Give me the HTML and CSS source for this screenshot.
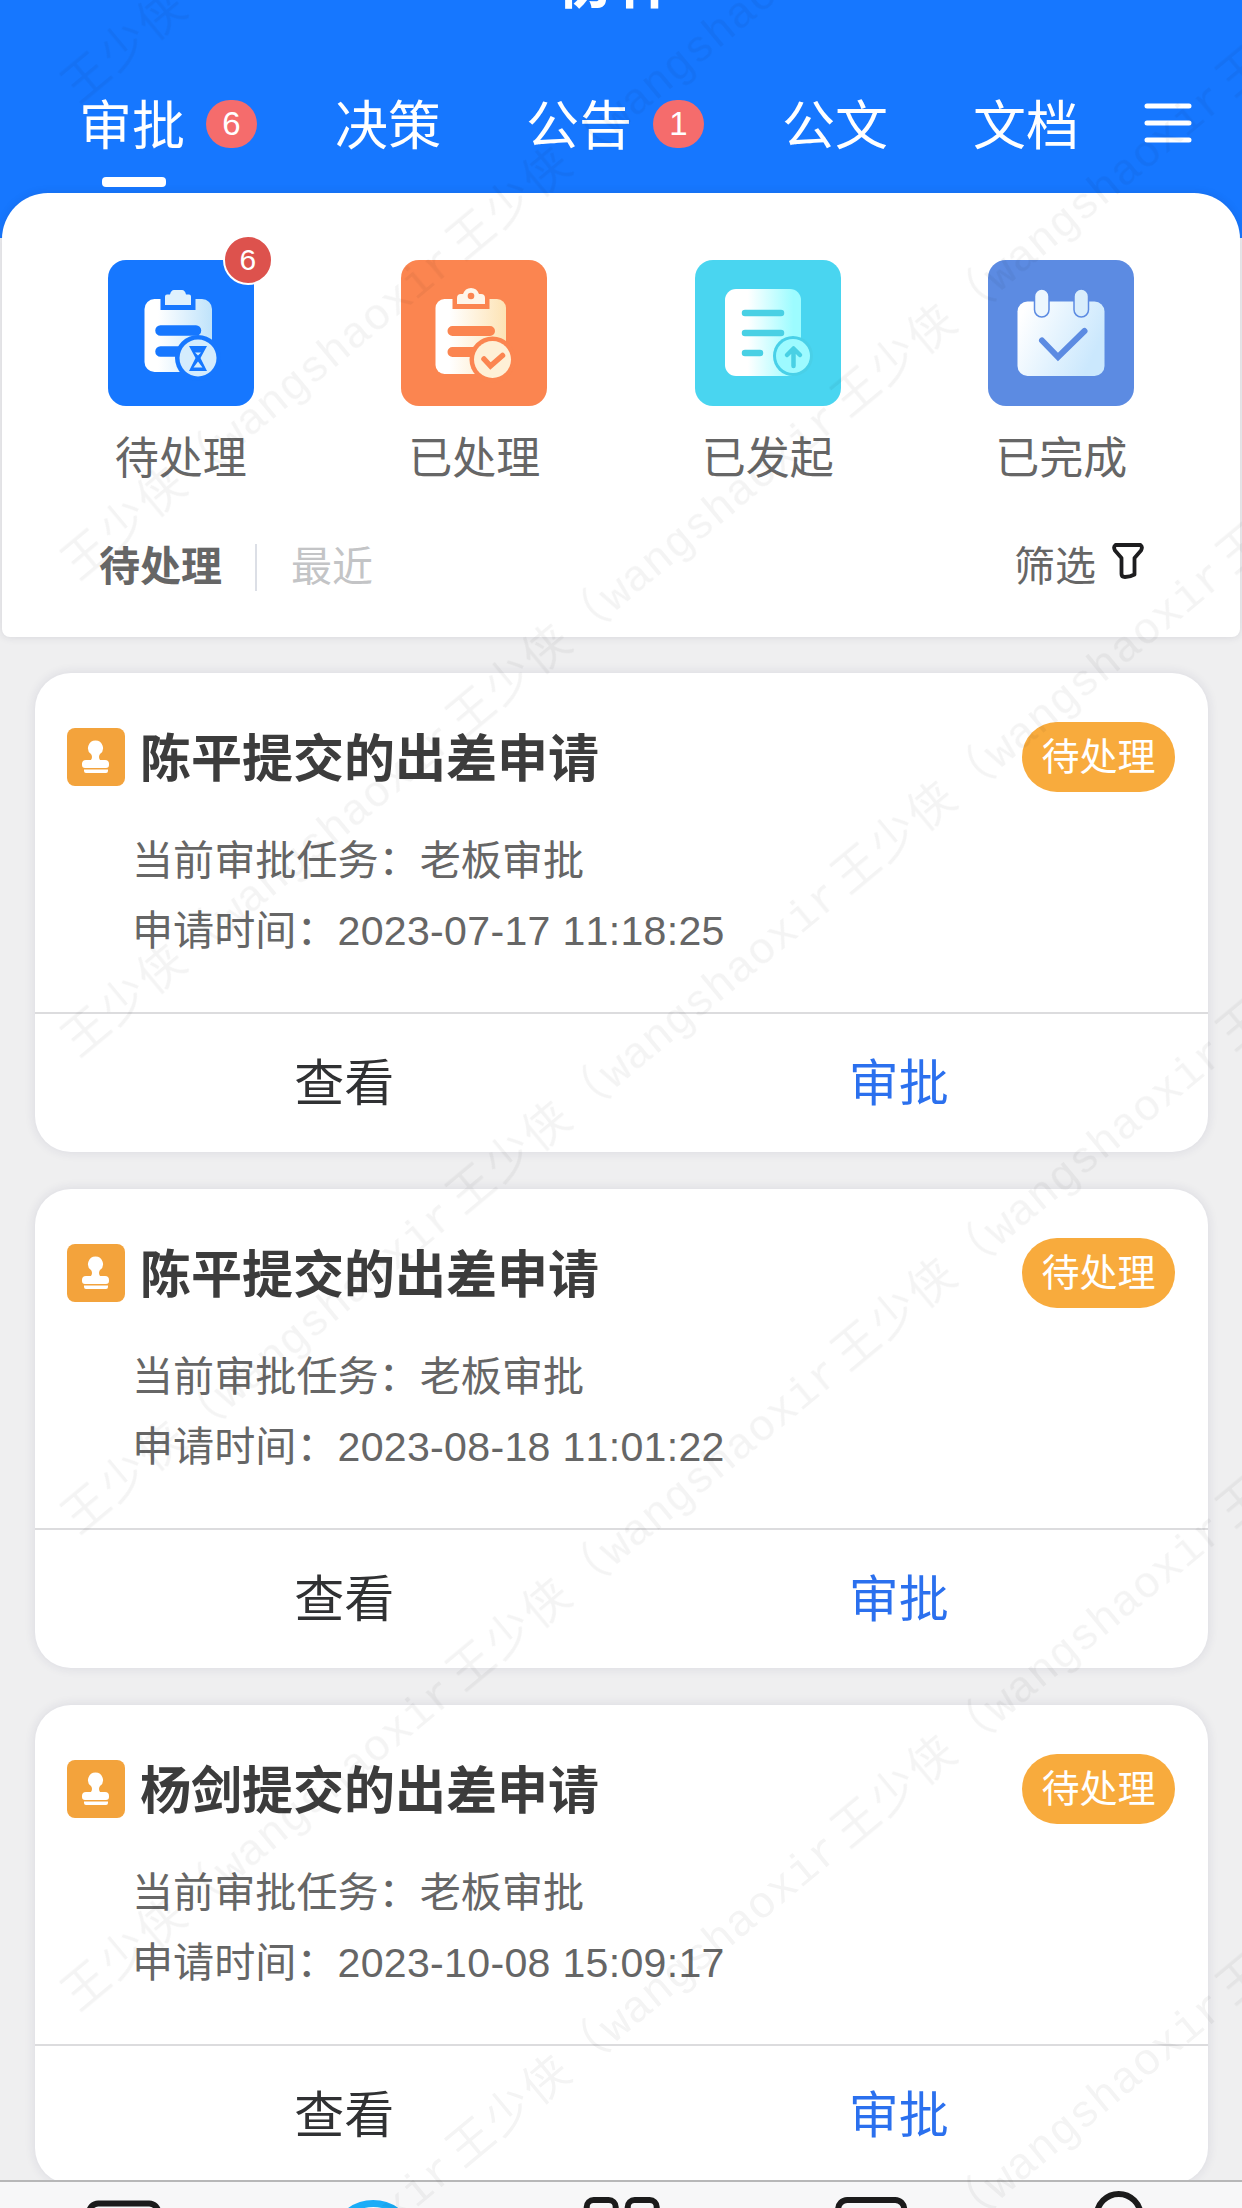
FILE: index.html
```html
<!DOCTYPE html>
<html lang="zh-CN">
<head>
    <meta charset="UTF-8">
    <meta name="viewport" content="width=device-width, initial-scale=1.0">
    <title>协作</title>
    <link rel="stylesheet" href="styles.css">
</head>
<body>
    <div class="app">
        <header class="header">
            <h1 class="page-title">协作</h1>
            <nav class="tabs">
                <a class="tab active">审批<span class="tab-badge">6</span></a>
                <a class="tab">决策</a>
                <a class="tab">公告<span class="tab-badge">1</span></a>
                <a class="tab">公文</a>
                <a class="tab">文档</a>
                <svg class="menu-icon" width="48" height="48" viewBox="0 0 48 48">
                    <path d="M3 5H45M3 22H45M3 39H45" stroke="#fff" stroke-width="5" stroke-linecap="round"/>
                </svg>
            </nav>
        </header>

        <section class="panel">
            <div class="shortcuts">
                <div class="shortcut">
                    <div class="tile tile-blue">
                        <svg viewBox="0 0 146 146">
                            <defs>
                                <linearGradient id="g1"><stop offset=".2" stop-color="#fff"/><stop offset="1" stop-color="#bfe3fb"/></linearGradient>
                            </defs>
                            <rect x="36.5" y="39" width="67.5" height="73" rx="10" fill="url(#g1)"/>
                            <path d="M52.5 37H87.5V50H52.5Z" fill="#1677ff"/>
                            <path d="M57 45V36.5Q57 34.5 59 34.5H62Q63 30 66 30H74Q77 30 78 34.5H81Q83 34.5 83 36.5V45Z" fill="#dff1fd"/>
                            <path d="M52.5 70.5H88M52.5 91.5H80" stroke="#1677ff" stroke-width="10.5" stroke-linecap="round"/>
                            <circle cx="90" cy="98" r="23" fill="#1677ff"/>
                            <circle cx="90" cy="98" r="18.5" fill="#d4ecfd"/>
                            <path d="M81 86H99L92.5 98L99 111H81L87.5 98Z" fill="#1677ff"/>
                            <path d="M87 92.5H93L90 95.5ZM90 101.5L94.5 107.5H85.5Z" fill="#d4ecfd"/>
                        </svg>
                        <span class="tile-badge">6</span>
                    </div>
                    <span class="shortcut-name">待处理</span>
                </div>
                <div class="shortcut">
                    <div class="tile tile-orange">
                        <svg viewBox="0 0 146 146">
                            <defs>
                                <linearGradient id="g2"><stop offset=".2" stop-color="#fff"/><stop offset="1" stop-color="#fde3b4"/></linearGradient>
                            </defs>
                            <rect x="34.5" y="39" width="70.5" height="75" rx="9" fill="url(#g2)"/>
                            <path d="M51.5 37H88.5V49H51.5Z" fill="#fb8550"/>
                            <path d="M56 44V38Q56 34 60 34H62Q64 28 70 28T78 34H80Q84 34 84 38V44Z" fill="#fef6ea"/>
                            <circle cx="70" cy="36" r="3.3" fill="#fb8550"/>
                            <path d="M51.5 71H89M51.5 92H80" stroke="#fb8550" stroke-width="10" stroke-linecap="round"/>
                            <circle cx="91.5" cy="99.5" r="23" fill="#fb8550"/>
                            <circle cx="91.5" cy="99.5" r="18.5" fill="#fef0d6"/>
                            <path d="M83 99L89.5 106L101.5 95.5" fill="none" stroke="#fb8550" stroke-width="5.5" stroke-linecap="round"/>
                        </svg>
                    </div>
                    <span class="shortcut-name">已处理</span>
                </div>
                <div class="shortcut">
                    <div class="tile tile-cyan">
                        <svg viewBox="0 0 146 146">
                            <defs>
                                <linearGradient id="g3"><stop offset=".3" stop-color="#fff"/><stop offset=".9" stop-color="#9dfcff"/></linearGradient>
                            </defs>
                            <rect x="30" y="29" width="76" height="87" rx="11" fill="url(#g3)"/>
                            <path d="M50 53H86M50 73H86M50 93H65" stroke="#49d0e4" stroke-width="6.5" stroke-linecap="round"/>
                            <circle cx="98" cy="96" r="20" fill="#49d0e8"/>
                            <circle cx="98" cy="96" r="17" fill="#9dfaff"/>
                            <path d="M98.5 106V90M92 95L98.5 88.5L105 95" fill="none" stroke="#49d0e4" stroke-width="4.5" stroke-linecap="round" stroke-linejoin="round"/>
                        </svg>
                    </div>
                    <span class="shortcut-name">已发起</span>
                </div>
                <div class="shortcut">
                    <div class="tile tile-indigo">
                        <svg viewBox="0 0 146 146">
                            <defs>
                                <linearGradient id="g4" y2=".4"><stop offset=".1" stop-color="#fff"/><stop offset="1" stop-color="#cbe8fd"/></linearGradient>
                            </defs>
                            <rect x="29.5" y="41.5" width="87" height="74.5" rx="10" fill="url(#g4)"/>
                            <g stroke="#5c8be2" stroke-width="1.5">
                                <rect x="46.5" y="29" width="14.5" height="28" rx="7.25" fill="#edf7fe"/>
                                <rect x="86" y="29" width="14.5" height="28" rx="7.25" fill="#d8edfc"/>
                            </g>
                            <path d="M54 80.5L70 97L96.5 71" fill="none" stroke="#5c8be2" stroke-width="6" stroke-linecap="round"/>
                        </svg>
                    </div>
                    <span class="shortcut-name">已完成</span>
                </div>
            </div>
            <div class="filter-bar">
                <span class="filter-item current">待处理</span>
                <span class="filter-item recent">最近</span>
                <span class="filter-btn">筛选
                    <svg width="32" height="36" viewBox="0 0 32 36">
                        <path d="M3.5 2H28.5Q31 4 29 7.5L22.5 15V31.5Q18 34 13 34Q9.5 34 9.5 31V15L3 7.5Q1 4 3.5 2Z" fill="none" stroke="#1d1d1f" stroke-width="3.8" stroke-linejoin="round"/>
                    </svg>
                </span>
            </div>
        </section>

        <main class="list">
            <article class="card">
                <div class="card-head">
                    <svg class="stamp" viewBox="0 0 58 58">
                        <path d="M28.5 12.5A7.5 7.5 0 0 1 33 26Q31 29 33 32H38Q42 32 42 36V37Q42 40 39 40H18Q15 40 15 37V36Q15 32 19 32H24Q26 29 24 26A7.5 7.5 0 0 1 28.5 12.5ZM17 41.5H41V43Q41 45 39 45H19Q17 45 17 43Z" fill="#fff"/>
                    </svg>
                    <h2 class="card-title">陈平提交的出差申请</h2>
                    <span class="status">待处理</span>
                </div>
                <div class="card-body">
                    <p>当前审批任务：老板审批</p>
                    <p>申请时间：<span class="time">2023-07-17 11:18:25</span></p>
                </div>
                <div class="card-actions">
                    <a class="action">查看</a>
                    <a class="action primary">审批</a>
                </div>
            </article>

            <article class="card">
                <div class="card-head">
                    <svg class="stamp" viewBox="0 0 58 58">
                        <path d="M28.5 12.5A7.5 7.5 0 0 1 33 26Q31 29 33 32H38Q42 32 42 36V37Q42 40 39 40H18Q15 40 15 37V36Q15 32 19 32H24Q26 29 24 26A7.5 7.5 0 0 1 28.5 12.5ZM17 41.5H41V43Q41 45 39 45H19Q17 45 17 43Z" fill="#fff"/>
                    </svg>
                    <h2 class="card-title">陈平提交的出差申请</h2>
                    <span class="status">待处理</span>
                </div>
                <div class="card-body">
                    <p>当前审批任务：老板审批</p>
                    <p>申请时间：<span class="time">2023-08-18 11:01:22</span></p>
                </div>
                <div class="card-actions">
                    <a class="action">查看</a>
                    <a class="action primary">审批</a>
                </div>
            </article>

            <article class="card">
                <div class="card-head">
                    <svg class="stamp" viewBox="0 0 58 58">
                        <path d="M28.5 12.5A7.5 7.5 0 0 1 33 26Q31 29 33 32H38Q42 32 42 36V37Q42 40 39 40H18Q15 40 15 37V36Q15 32 19 32H24Q26 29 24 26A7.5 7.5 0 0 1 28.5 12.5ZM17 41.5H41V43Q41 45 39 45H19Q17 45 17 43Z" fill="#fff"/>
                    </svg>
                    <h2 class="card-title">杨剑提交的出差申请</h2>
                    <span class="status">待处理</span>
                </div>
                <div class="card-body">
                    <p>当前审批任务：老板审批</p>
                    <p>申请时间：<span class="time">2023-10-08 15:09:17</span></p>
                </div>
                <div class="card-actions">
                    <a class="action">查看</a>
                    <a class="action primary">审批</a>
                </div>
            </article>
        </main>

        <footer class="tabbar">
            <svg viewBox="0 0 248 26"><rect x="89" y="21.5" width="69" height="60" rx="9"/></svg>
            <svg class="on" viewBox="0 0 248 26"><circle cx="125" cy="61" r="39.5"/></svg>
            <svg viewBox="0 0 248 26"><rect x="89.5" y="18" width="29" height="29" rx="7"/><rect x="130.5" y="18" width="29" height="29" rx="7"/></svg>
            <svg viewBox="0 0 248 26"><rect x="93" y="18" width="66" height="60" rx="9"/></svg>
            <svg viewBox="0 0 248 26"><circle cx="124.5" cy="34" r="22"/></svg>
        </footer>

        <!-- user watermark, one column of marks repeated across the screen -->
        <svg class="watermark" width="1242" height="2208">
            <defs>
                <g id="mark"><text transform="rotate(-39.7)"><tspan class="wm-name">王少侠（</tspan><tspan class="wm-id">wangshaoxir</tspan></text></g>
                <g id="marks">
                    <use href="#mark" y="-477"/>
                    <use href="#mark"/>
                    <use href="#mark" y="477"/>
                    <use href="#mark" y="954"/>
                    <use href="#mark" y="1431"/>
                    <use href="#mark" y="1908"/>
                    <use href="#mark" y="2385"/>
                </g>
            </defs>
            <use href="#marks" x="78" y="104"/>
            <use href="#marks" x="463" y="-216"/>
            <use href="#marks" x="848" y="-59"/>
            <use href="#marks" x="1233" y="98"/>
        </svg>
    </div>
</body>
</html>
```

FILE: styles.css
```css
* {
    box-sizing: border-box;
}
body {
    margin: 0;
    background: #efeff0;
    font-family: "Liberation Sans", "Noto Sans CJK SC", sans-serif;
    color: #666;
}
h1, h2, p {
    margin: 0;
}
.app {
    position: relative;
    width: 1242px;
    height: 2208px;
    overflow: hidden;
    display: flex;
    flex-direction: column;
}
.header {
    flex: none;
    height: 238px;
    margin-bottom: -45px;
    background: #1677ff;
    color: #fff;
}
.page-title {
    height: 72px;
    margin-top: -58px;
    padding-right: 8px;
    font-size: 60px;
    line-height: 82px;
    font-weight: bold;
    text-align: center;
}
.tabs {
    display: flex;
    align-items: center;
    gap: 85px;
    height: 106px;
    margin-top: 58px;
    padding: 0 50px 0 79px;
}
.tab {
    position: relative;
    display: flex;
    flex: none;
    align-items: center;
    padding-top: 4px;
    font-size: 53px;
    line-height: 78px;
    white-space: nowrap;
}
.tab.active::after {
    content: "";
    position: absolute;
    left: 23px;
    bottom: -21px;
    width: 64px;
    height: 10px;
    border-radius: 4px;
    background: #fff;
}
.tab-badge {
    width: 51px;
    height: 48px;
    margin: -6px -7px 0 21px;
    border-radius: 25px;
    background: #f56c6c;
    font-size: 33px;
    line-height: 47px;
    text-align: center;
}
.menu-icon {
    flex: none;
    margin-left: -20px;
}
.panel {
    flex: none;
    height: 444px;
    margin: 0 2px 0 2px;
    padding: 67px 32px 0 32px;
    border-radius: 46px 46px 8px 8px;
    background: #fff;
    box-shadow: 0 0 9px rgba(40, 40, 70, 0.13);
}
.shortcuts {
    display: grid;
    grid-template-columns: repeat(4, 1fr);
}
.shortcut {
    display: flex;
    flex-direction: column;
    align-items: center;
}
.tile {
    position: relative;
    width: 146px;
    height: 146px;
    border-radius: 18px;
}
.tile svg {
    display: block;
}
.tile-blue {
    background: #1677ff;
}
.tile-orange {
    background: #fb8550;
}
.tile-cyan {
    background: #49d5f0;
}
.tile-indigo {
    background: #5c8be2;
}
.tile-badge {
    position: absolute;
    top: -25px;
    right: -19px;
    width: 50px;
    height: 50px;
    border: 2px solid #fff;
    border-radius: 50%;
    background: #dd524d;
    color: #fff;
    font-size: 30px;
    line-height: 46px;
    text-align: center;
}
.shortcut-name {
    margin-top: 21px;
    font-size: 44px;
    line-height: 64px;
}
.filter-bar {
    display: flex;
    align-items: center;
    height: 60px;
    margin-top: 46px;
    padding: 0 64px 0 65px;
    font-size: 41px;
    line-height: 60px;
}
.filter-item.current {
    font-weight: bold;
}
.filter-item.recent {
    margin-left: 33px;
    padding-left: 34px;
    border-left: 2px solid #dcdfe6;
    line-height: 47px;
    color: #c3c4c6;
}
.filter-btn {
    display: flex;
    align-items: center;
    gap: 16px;
    margin-left: auto;
}
.filter-btn svg {
    margin-bottom: 12px;
}
.list {
    flex: 1;
    min-height: 0;
    padding: 36px 34px 0 35px;
}
.card {
    height: 479px;
    margin-bottom: 37px;
    border-radius: 36px;
    background: #fff;
    box-shadow: 0 0 10px 2px rgba(40, 40, 90, 0.08);
}
.card-head {
    display: flex;
    align-items: center;
    height: 168px;
    padding: 0 33px 0 32px;
}
.stamp {
    width: 58px;
    height: 58px;
    border-radius: 8px;
    background: #f3a33c;
}
.card-title {
    flex: 1;
    margin-left: 15px;
    padding-top: 5px;
    font-size: 51px;
    line-height: 74px;
    font-weight: bold;
    color: #3c3c3c;
}
.status {
    width: 153px;
    height: 70px;
    border-radius: 35px;
    background: #f8ab3d;
    color: #fff;
    font-size: 38px;
    line-height: 70px;
    text-align: center;
}
.card-body {
    height: 174px;
    margin-top: -15px;
    padding: 0 97px;
    font-size: 41.1px;
    line-height: 70px;
}
.time {
    font-kerning: none;
    letter-spacing: 0.3px;
}
.card-actions {
    display: flex;
    height: 139px;
    margin-top: 12px;
    padding: 0 32px;
    border-top: 2px solid #dcdcde;
}
.action {
    flex: 1;
    font-size: 50px;
    line-height: 140px;
    text-align: center;
    color: #303133;
}
.action.primary {
    color: #2b70ee;
}
.tabbar {
    position: relative;
    flex: none;
    display: flex;
    height: 28px;
    border-top: 2px solid #b7b7b8;
    background: #f7f7f8;
}
.tabbar svg {
    flex: 1;
    height: 26px;
    fill: none;
    stroke: #1b1b1b;
    stroke-width: 6px;
}
.tabbar .on {
    stroke: #1aadf8;
    stroke-width: 7px;
}
.watermark {
    position: absolute;
    left: 0;
    top: 0;
    opacity: 0.045;
    pointer-events: none;
}
.wm-name {
    font-family: "Noto Sans CJK SC", sans-serif;
    font-size: 46px;
    letter-spacing: 3px;
}
.wm-id {
    font-family: "Liberation Mono", monospace;
    font-size: 45px;
}
```
